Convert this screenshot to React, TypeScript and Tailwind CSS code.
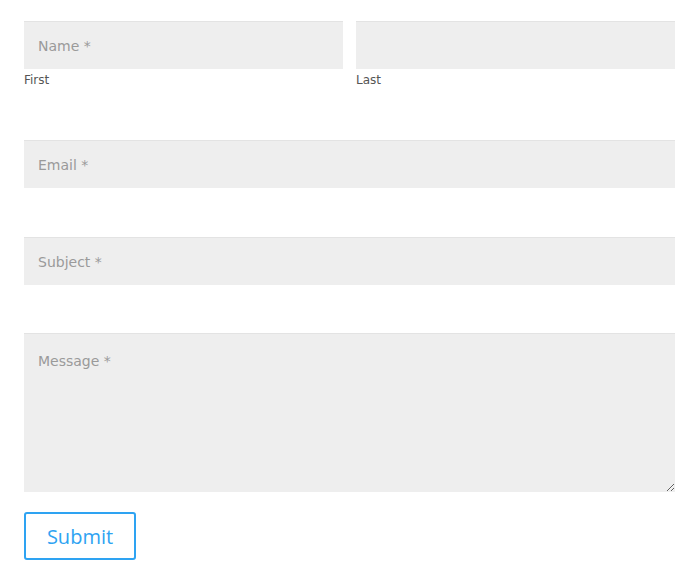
import React from "react";

export default function App() {
  const field =
    "block w-full h-12 bg-[#eeeeee] border-0 border-t border-t-[#e3e3e3] px-[14px] text-[14px] text-[#666] placeholder:text-[#9a9a9a] outline-none";
  return (
    <div
      className="w-[700px] h-[582px] bg-white pl-6 pr-[25px] pt-[21px]"
      style={{ fontFamily: '"DejaVu Sans", "Open Sans", sans-serif' }}
    >
      <div className="flex gap-[13px]">
        <div className="flex-1">
          <input className={field} placeholder="Name *" />
          <div className="mt-[3px] text-[12px] leading-[16px] text-[#555]">First</div>
        </div>
        <div className="flex-1">
          <input className={field} placeholder="" />
          <div className="mt-[3px] text-[12px] leading-[16px] text-[#555]">Last</div>
        </div>
      </div>
      <div className="mt-[52px]">
        <input className={field} placeholder="Email *" />
      </div>
      <div className="mt-[49px]">
        <input className={field} placeholder="Subject *" />
      </div>
      <div className="mt-[48px]">
        <textarea
          className="block w-full h-[159px] bg-[#eeeeee] border-0 border-t border-t-[#e3e3e3] px-[14px] pt-[17px] text-[14px] text-[#666] placeholder:text-[#9a9a9a] outline-none resize-y"
          placeholder="Message *"
        />
      </div>
      <div className="mt-[20px]">
        <button
          className="h-12 w-[112px] rounded-[3px] border-2 border-[#2ea3f2] bg-white pt-[2px] text-[20px] text-[#2ea3f2]"
          style={{ fontFamily: '"Open Sans", sans-serif' }}
        >
          Submit
        </button>
      </div>
    </div>
  );
}
